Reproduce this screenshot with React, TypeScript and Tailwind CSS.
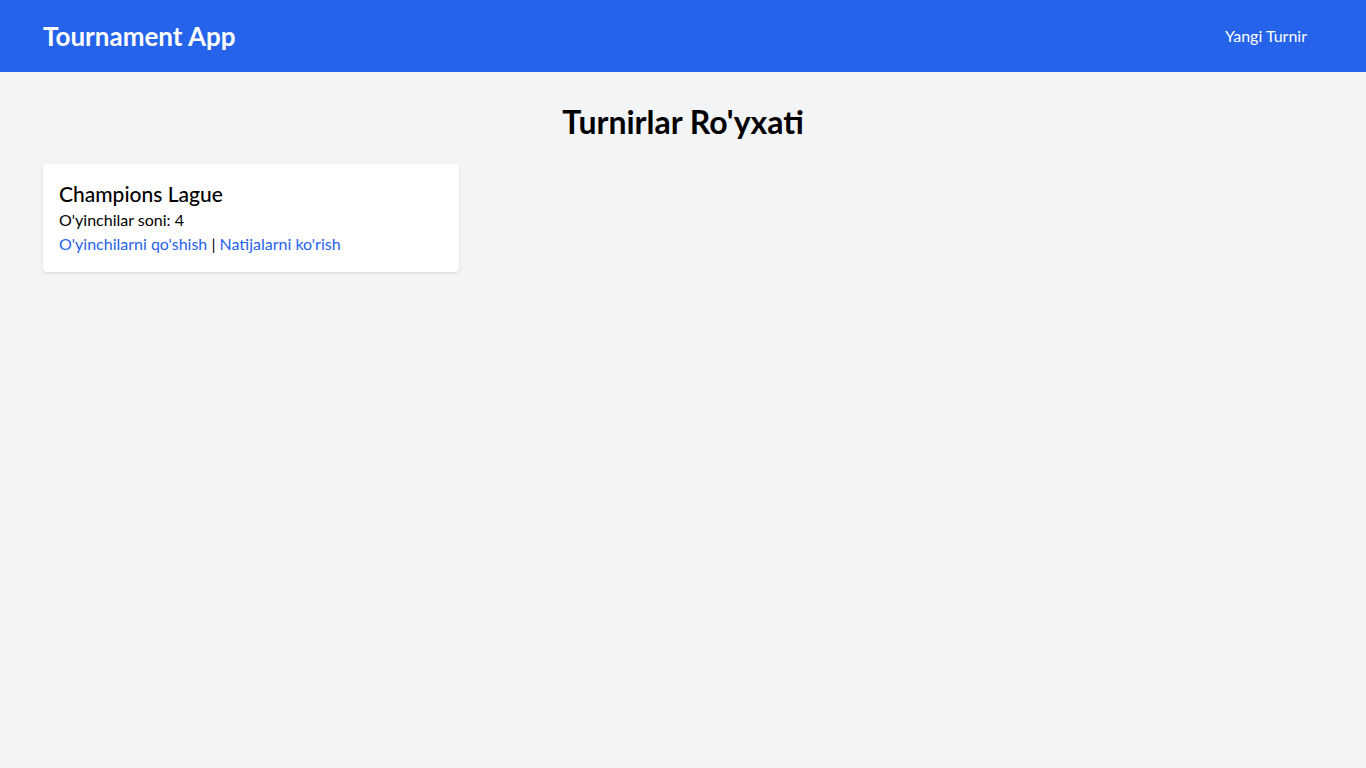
import React from 'react';

const font = { fontFamily: 'Lato, "Noto Sans", sans-serif' };

const App: React.FC = () => {
  return (
    <div className="min-h-screen bg-gray-100 text-black" style={font}>
      <nav className="bg-[#2563eb] text-white">
        <div className="container mx-auto py-5 flex items-center justify-between">
          <a href="#" className="text-[26px] leading-8 font-bold">Tournament App</a>
          <a href="#" className="mr-4 text-base">Yangi Turnir</a>
        </div>
      </nav>

      <main className="container mx-auto py-8">
        <h1 className="text-[32px] leading-9 font-bold text-center mb-6">Turnirlar Ro'yxati</h1>
        <div className="grid grid-cols-3 gap-4">
          <div className="bg-white p-4 rounded shadow">
            <h2 className="text-[21px] leading-7 font-medium">Champions Lague</h2>
            <p className="text-base">O'yinchilar soni: 4</p>
            <div className="text-base">
              <a href="#" className="text-[#2563eb]">O'yinchilarni qo'shish</a> |{' '}
              <a href="#" className="text-[#2563eb]">Natijalarni ko'rish</a>
            </div>
          </div>
        </div>
      </main>
    </div>
  );
};

export default App;
